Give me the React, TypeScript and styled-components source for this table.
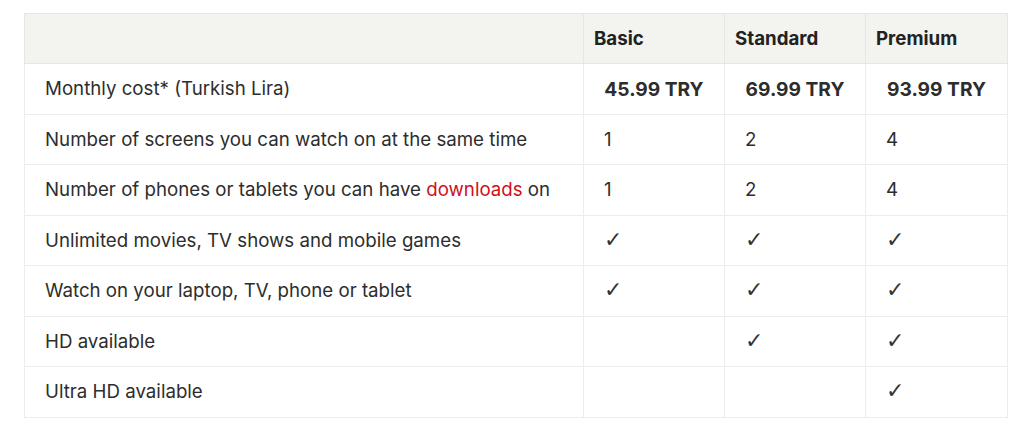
import React from "react";
import styled, { createGlobalStyle } from "styled-components";

const Global = createGlobalStyle`
  html, body { margin: 0; padding: 0; background: #fff; }
  body { font-family: Inter, Roboto, "Liberation Sans", sans-serif; color: #2d2d2d; }
`;

const Page = styled.div`
  padding: 13px 0 0 24px;
`;

const Table = styled.table`
  width: 983px;
  border-collapse: collapse;
  table-layout: fixed;
  border: 1px solid #e0e0e0;
  font-size: 18.7px;
`;

const Col = styled.col<{ $w: number }>`
  width: ${(p) => p.$w}px;
`;

const HeadRow = styled.tr`
  background: #f3f3ef;
  height: 50px;
`;

const Row = styled.tr`
  height: 50.5px;
`;

const Th = styled.th`
  text-align: left;
  font-weight: 700;
  padding: 0 10px;
  border: 1px solid #e6e6e6;
  color: #222;
`;

const Label = styled.td`
  padding: 0 20px;
  border: 1px solid #ececec;
  white-space: nowrap;
`;

const Cell = styled.td<{ $price?: boolean }>`
  padding: 0 20px;
  border: 1px solid #ececec;
  text-align: ${(p) => (p.$price ? "center" : "left")};
  font-weight: ${(p) => (p.$price ? 700 : 400)};
  font-size: ${(p) => (p.$price ? "19.2px" : "18.7px")};
  white-space: nowrap;
`;

const Check = styled.span`
  font-family: "DejaVu Sans", sans-serif;
  font-size: 22px;
  line-height: 1;
  color: #333;
`;

const Red = styled.span`
  color: #d0111a;
`;

const rows: { label: React.ReactNode; vals: string[]; price?: boolean }[] = [
  { label: "Monthly cost* (Turkish Lira)", vals: ["45.99 TRY", "69.99 TRY", "93.99 TRY"], price: true },
  { label: "Number of screens you can watch on at the same time", vals: ["1", "2", "4"] },
  {
    label: (
      <>
        Number of phones or tablets you can have <Red>downloads</Red> on
      </>
    ),
    vals: ["1", "2", "4"],
  },
  { label: "Unlimited movies, TV shows and mobile games", vals: ["✓", "✓", "✓"] },
  { label: "Watch on your laptop, TV, phone or tablet", vals: ["✓", "✓", "✓"] },
  { label: "HD available", vals: ["", "✓", "✓"] },
  { label: "Ultra HD available", vals: ["", "", "✓"] },
];

export default function App() {
  return (
    <Page>
      <Global />
      <Table>
        <colgroup>
          <Col $w={559} />
          <Col $w={141} />
          <Col $w={141} />
          <Col $w={142} />
        </colgroup>
        <thead>
          <HeadRow>
            <Th></Th>
            <Th>Basic</Th>
            <Th>Standard</Th>
            <Th>Premium</Th>
          </HeadRow>
        </thead>
        <tbody>
          {rows.map((r, i) => (
            <Row key={i}>
              <Label>{r.label}</Label>
              {r.vals.map((v, j) => (
                <Cell key={j} $price={r.price}>
                  {v === "✓" ? <Check>✓</Check> : v}
                </Cell>
              ))}
            </Row>
          ))}
        </tbody>
      </Table>
    </Page>
  );
}
